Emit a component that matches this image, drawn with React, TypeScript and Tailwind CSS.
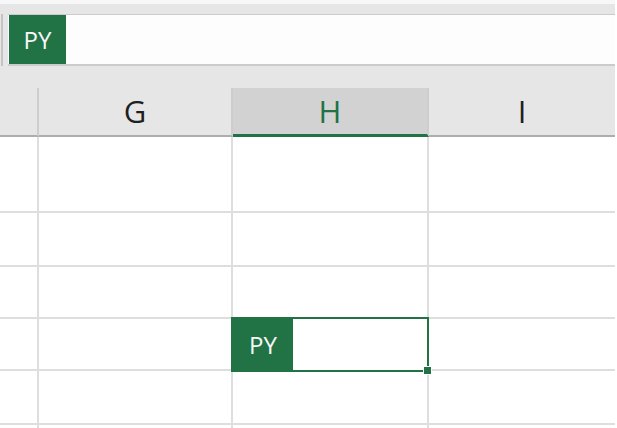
const GREEN = 'bg-[#217346]';

function HeaderCell({ label, width, active }: { label: string; width: string; active?: boolean }) {
  return (
    <div
      className={`${width} h-full flex items-center justify-center text-[31px] leading-none ${
        active
          ? 'bg-[#d2d2d2] text-[#217346] border-b-[3px] border-[#217346]'
          : 'text-[#1f1f1f] border-b-2 border-[#adadad]'
      } border-r-2 border-r-[#cdcdcd]`}
    >
      {label}
    </div>
  );
}

const ROWS = [76, 54, 52, 52, 54, 40];

export default function App() {
  return (
    <div
      className="w-[617px] h-[428px] overflow-hidden bg-white flex"
      style={{ fontFamily: '"Open Sans", "Liberation Sans", sans-serif' }}
    >
      <div className="w-[615px] flex flex-col shrink-0">
        {/* Formula bar area */}
        <div className="h-[4px] shrink-0 bg-[#f7f7f7]" />
        <div className="shrink-0 bg-[#e6e6e6] pt-[10px] flex items-stretch">
          <div className="w-[8px] flex">
            <div className="ml-[1px] w-[2px] bg-[#c4c4c4]" />
          </div>
          <div className="flex-1 h-[52px] flex border-t border-b-2 border-[#cbcbcb] bg-[#fdfdfd]">
            <div className={`w-[57px] ${GREEN} ml-[1px] flex items-center justify-center text-[24px] text-[#f7f7f7]`}>
              PY
            </div>
            <div className="flex-1" />
          </div>
        </div>

        {/* Column headers */}
        <div className="shrink-0 bg-[#e6e6e6] pt-[22px]">
          <div className="h-[49px] flex">
            <div className="w-[39px] h-full border-r-2 border-r-[#cdcdcd] border-b-2 border-[#adadad]" />
            <HeaderCell label="G" width="w-[194px]" />
            <HeaderCell label="H" width="w-[196px]" active />
            <div className="flex-1 h-full flex items-center justify-center text-[31px] leading-none text-[#1f1f1f] border-b-2 border-[#adadad]">
              I
            </div>
          </div>
        </div>

        {/* Grid */}
        <div className="flex flex-col shrink-0">
          {ROWS.map((h, i) => (
            <div key={i} className="flex shrink-0" style={{ height: h }}>
              <div className="w-[39px] border-r-2 border-b-2 border-[#dedede]" />
              <div className="w-[194px] border-r-2 border-b-2 border-[#dedede]" />
              <div className="w-[196px] border-r-2 border-b-2 border-[#dedede] relative">
                {i === 3 && (
                  <div className="absolute left-[-2px] top-[-2px] right-[-2px] bottom-[-3px] z-10 flex border-2 border-[#217346] bg-white">
                    <div className={`w-[60px] ${GREEN} flex items-center justify-center text-[24px] text-[#f7f7f7]`}>
                      PY
                    </div>
                    <div className="flex-1" />
                    <div className="absolute right-[-5px] bottom-[-5px] w-[9px] h-[9px] bg-[#217346] border border-white" />
                  </div>
                )}
              </div>
              <div className="flex-1 border-b-2 border-[#dedede]" />
            </div>
          ))}
        </div>
      </div>
      <div className="flex-1 bg-white" />
    </div>
  );
}
